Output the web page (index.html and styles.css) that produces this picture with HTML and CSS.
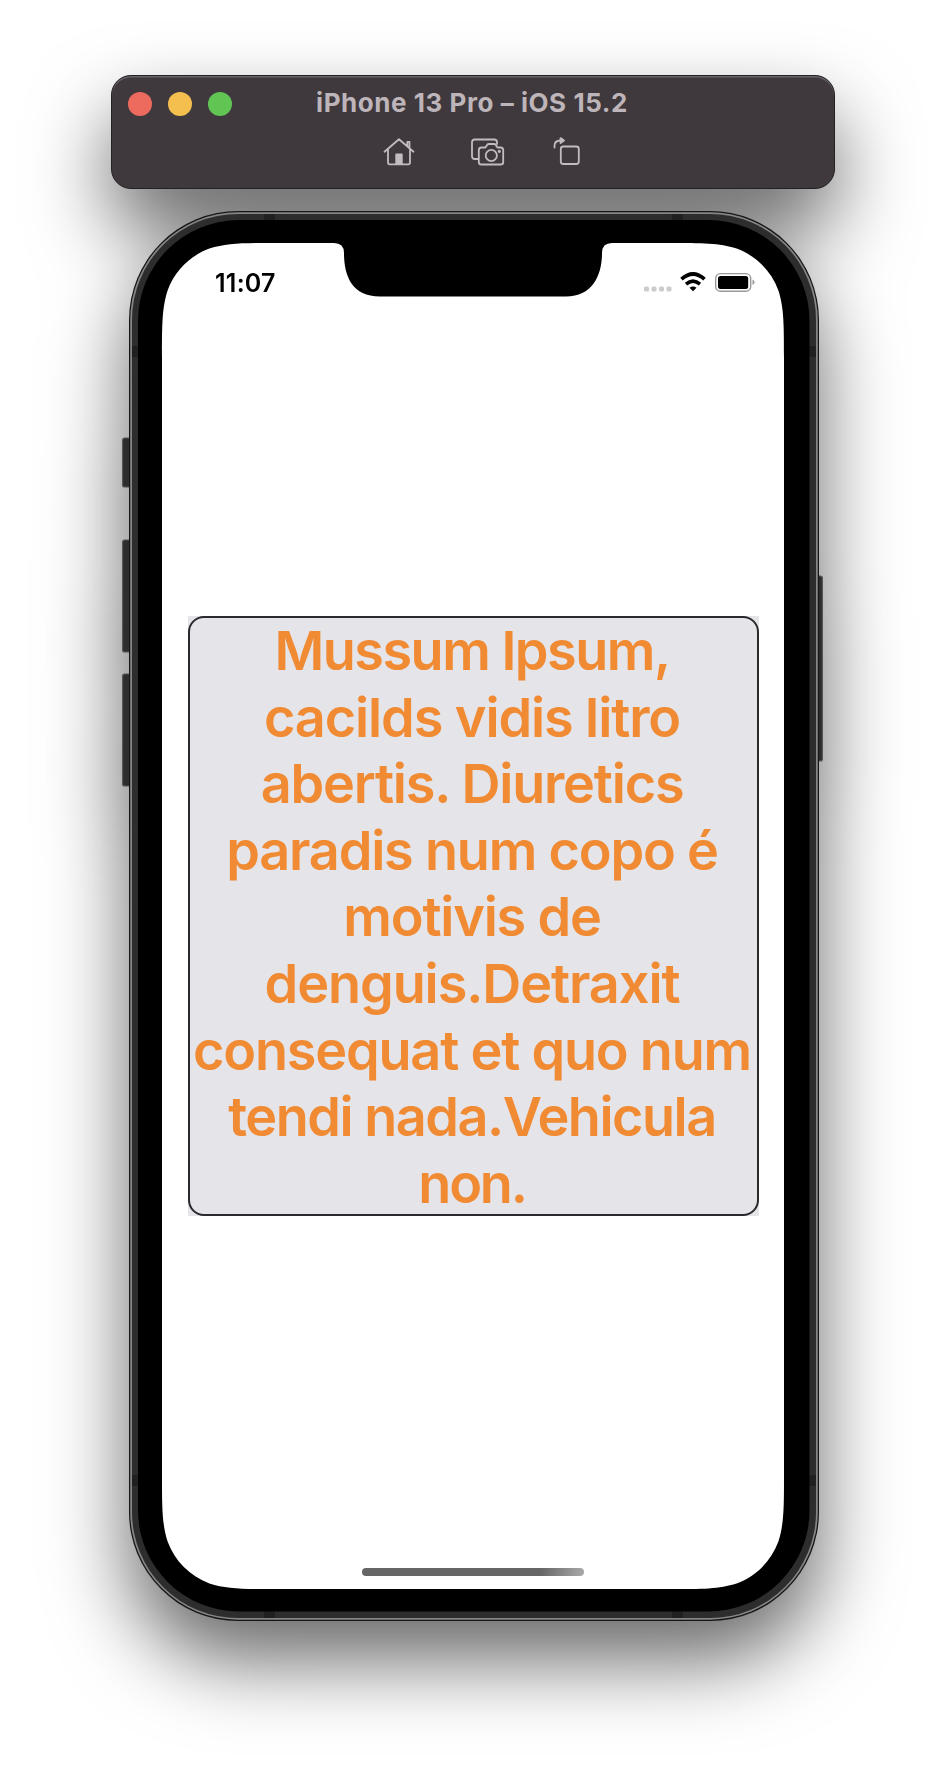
FILE: index.html
```
<!DOCTYPE html>
<html lang="en">
<head>
<meta charset="utf-8">
<title>iPhone 13 Pro – iOS 15.2</title>
<link rel="stylesheet" href="styles.css">
</head>
<body>
<main class="simulator">
  <header class="toolbar">
    <div class="titlebar">
      <div class="lights"><i class="light red"></i><i class="light yellow"></i><i class="light green"></i></div>
      <h1 class="title">iPhone 13 Pro – iOS 15.2</h1>
    </div>
    <nav class="actions">
      <svg width="32" height="30" viewBox="0 0 32 30" fill="none" stroke="#c3bbc0" stroke-width="1.8" stroke-linecap="round" stroke-linejoin="round">
        <path d="M1.500 14.700 16 2.200 30.500 14.700M5 12v13.500q0 1.800 1.800 1.800h18.400q1.800 0 1.800-1.800V12M24.300 9V4.800h2.200v6.300"/>
        <path d="M13.200 17.500h5.600v9.500h-5.600z" fill="#c3bbc0"/>
      </svg>
      <svg width="34" height="30" viewBox="0 0 34 30" fill="none" stroke="#c3bbc0" stroke-width="1.8" stroke-linecap="round" stroke-linejoin="round">
        <path d="M7 22H3.800Q1 22 1 19.200V5.300Q1 2.500 3.800 2.500h19.400Q26 2.500 26 5.300V7"/>
        <path d="M10.400 10.500h4l1.700-2.600q.6-.9 1.700-.9h5.300q1.100 0 1.700.9l1.700 2.600h3.100q2.600 0 2.600 2.600v11.800q0 2.600-2.600 2.600H10.400q-2.600 0-2.600-2.600V13.100q0-2.600 2.600-2.600z"/>
        <circle cx="20.300" cy="18.500" r="5.600"/><circle cx="28.300" cy="14.300" r=".7" fill="#c3bbc0"/>
      </svg>
      <svg width="28" height="30" viewBox="0 0 28 30" fill="none" stroke="#c3bbc0" stroke-width="1.800" stroke-linecap="round" stroke-linejoin="round">
        <rect x="7.800" y="9.500" width="18" height="17.500" rx="2.500"/><path d="M1.500 10.500V9Q1.500 3.500 7.500 3.500H10"/><path d="M7.500 1.100 11 3.500 7.500 6z" fill="#c3bbc0"/>
      </svg>
    </nav>
  </header>

  <section class="phone">
    <svg class="chassis" width="704" height="1412" viewBox="121 210 704 1412">
      <g fill="#2d2d2d" stroke="#555" stroke-width="1.200">
        <rect x="122.600" y="438" width="12" height="49" rx="2"/>
        <rect x="122.600" y="540" width="12" height="112" rx="2"/>
        <rect x="122.600" y="674" width="12" height="112" rx="2"/>
        <rect x="812" y="576" width="10.400" height="185" rx="2"/>
      </g>
      <rect x="129" y="211" width="690" height="1410" rx="109" fill="#161616"/>
      <rect x="130.200" y="212.200" width="687.600" height="1407.500" rx="108" fill="#858585"/>
      <rect x="132" y="214" width="684" height="1404" rx="106" fill="#2d2d2d"/>
      <path fill="#202020" d="M264 214h11v7h-11zM672 214h11v7h-11zM264 1611h11v7h-11zM672 1611h11v7h-11zM132 346h7v11h-7zM809 346h7v11h-7zM132 1475h7v11h-7zM809 1475h7v11h-7z"/>
      <rect x="138" y="220" width="671.500" height="1391.500" rx="101" fill="#000"/>
      <path fill="#fff" d="M276.600 243H334Q344 243 344 253C344 276 352 296.500 380 296.500H566C592 296.500 602 276 602 253Q602 243 612 243H669.400C702.400 243 718.900 243 736.600 248.600C756 255.700 771.300 271 778.400 290.400C784 308.100 784 324.600 784 357.600V1474.400C784 1507.400 784 1523.900 778.400 1541.600C771.300 1561 756 1576.300 736.600 1583.400C718.900 1589 702.400 1589 669.400 1589H276.600C243.600 1589 227.100 1589 209.400 1583.400C190 1576.300 174.700 1561 167.600 1541.600C162 1523.900 162 1507.400 162 1474.400V357.600C162 324.600 162 308.100 167.600 290.400C174.700 271 190 255.700 209.400 248.600C227.100 243 243.600 243 276.600 243Z"/>
    </svg>
    <div class="screen">
      <div class="status">
        <time class="clock">11:07</time>
        <svg width="112" height="22" viewBox="643 271 112 22">
          <g fill="#ccc"><rect x="644" y="286.500" width="5" height="5" rx="1.500"/><rect x="651.500" y="286.500" width="5" height="5" rx="1.500"/><rect x="659" y="286.500" width="5" height="5" rx="1.500"/><rect x="666.500" y="286.500" width="5" height="5" rx="1.500"/></g>
          <g fill="none" stroke="#000" stroke-width="3.600"><path d="M681.500 279.200Q693 268.800 704.500 279.200"/><path d="M686 284.200Q693 278.200 700 284.200"/></g>
          <path d="M689.500 287.800Q693 285 696.500 287.800L693 291.300z"/>
          <rect x="715.700" y="273.600" width="35" height="17.600" rx="4.800" fill="none" stroke="#999" stroke-width="1.400"/>
          <rect x="718" y="276" width="30.200" height="13" rx="2.500"/><path d="M752.500 279.500q2 .7 2 2.800t-2 2.800z" fill="#999"/>
        </svg>
      </div>
      <div class="label"><p class="text">
        <span class="tight">Mussum Ipsum,</span>
        <span class="loose">cacilds vidis litro</span>
        <span>abertis. Diuretics</span>
        <span>paradis num copo é</span>
        <span>motivis de</span>
        <span class="loose">denguis.Detraxit</span>
        <span>consequat et quo num</span>
        <span class="tight">tendi nada.Vehicula</span>
        <span class="tighter">non.</span>
      </p></div>
      <div class="home"></div>
    </div>
  </section>
</main>
</body>
</html>
```
FILE: styles.css
```
* { box-sizing: border-box; }
body { margin: 0; background: #fff; font-family: Inter, "Liberation Sans", sans-serif; }
.simulator {
  width: 946px; height: 1772px; padding-top: 75px; overflow: hidden;
  display: flex; flex-direction: column; align-items: center; gap: 21px;
  filter: drop-shadow(0 40px 40px rgba(0, 0, 0, .59));
}
.toolbar {
  width: 724px; height: 114px; border-radius: 20px; background: #3f393d;
  border: 1px solid #242124; box-shadow: inset 0 1.5px 0 #69636a;
}
.titlebar { display: grid; grid-template-columns: 100px 1fr 118px; height: 55px; align-items: center; padding-left: 16px; }
.lights { display: flex; gap: 16px; }
.light { width: 24px; height: 24px; border-radius: 50%; flex: none; }
.red { background: #ec6a5e; }
.yellow { background: #f5bf4f; }
.green { background: #61c554; }
.title { margin: 0; padding-bottom: 2px; text-align: center; color: #bdb5ba; font-size: 26px; letter-spacing: .55px; font-weight: 700; line-height: 30px; white-space: nowrap; }
.actions { display: flex; padding-left: 271px; gap: 56px; margin-top: 6px; }
.actions svg:last-child { margin-left: -8.500px; }
.phone { position: relative; width: 704px; height: 1412px; }
.chassis { position: absolute; inset: 0; }
.screen { position: relative; margin: 33px 0 0 41px; width: 622px; height: 1346px; display: flex; flex-direction: column; align-items: center; }
.status { width: 100%; height: 373px; padding: 28px 29px 0 53px; display: flex; justify-content: space-between; align-items: flex-start; }
.clock { font-size: 25px; line-height: 24px; letter-spacing: .25px; font-weight: 600; color: #000; }
.label { width: 571px; height: 600px; background: #e5e4e9; flex: none; }
.text {
  margin: 0; height: 600px; padding-right: 2px; border: 2px solid #2a2a2c; border-radius: 16px;
  color: #f08a33; font-size: 54px; font-weight: 600; line-height: 66.6px; letter-spacing: -1.2px; text-align: center;
}
.text span { display: block; white-space: nowrap; }
.text .tight { letter-spacing: -1.5px; }
.text .tighter { letter-spacing: -2.2px; }
.text .loose { letter-spacing: -1.1px; }
.home { margin-top: 352px; width: 222px; height: 8px; border-radius: 4px; background: linear-gradient(100deg, #666 0%, #666 80%, #aaa 100%); }
```
